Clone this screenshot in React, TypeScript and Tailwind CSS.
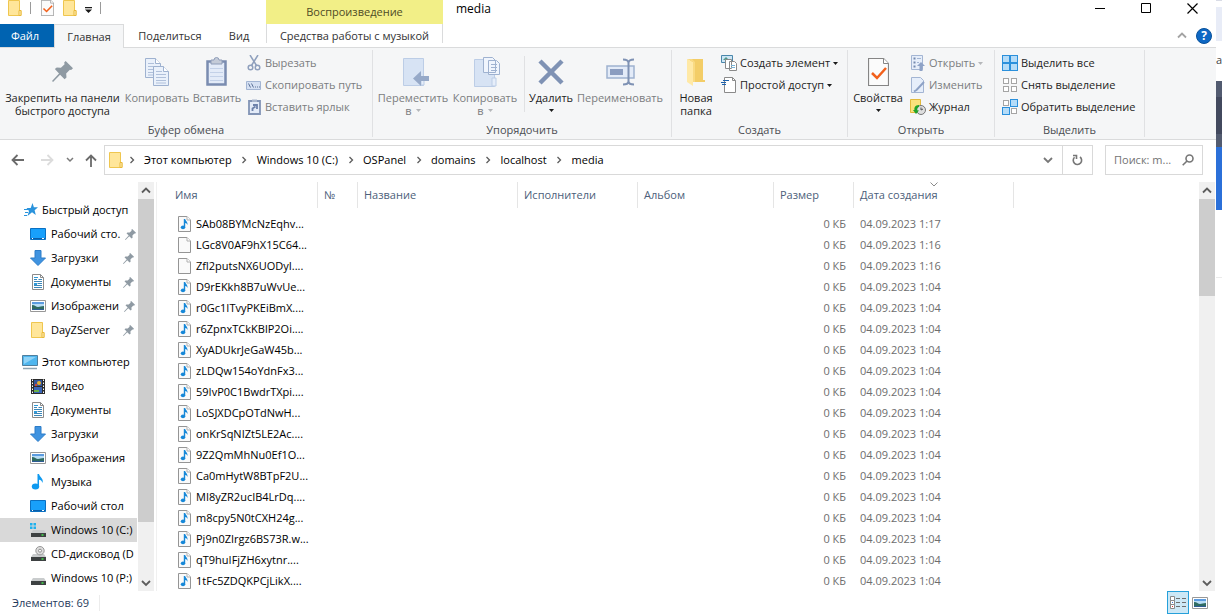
import type { ReactNode } from 'react';

type NavKind = 'desktop' | 'download' | 'doc' | 'picture' | 'folder' | 'video' | 'music' | 'windisk' | 'cd' | 'disk';

const pinned: { name: string; icon: NavKind }[] = [
  { name: 'Рабочий сто.', icon: 'desktop' },
  { name: 'Загрузки', icon: 'download' },
  { name: 'Документы', icon: 'doc' },
  { name: 'Изображени', icon: 'picture' },
  { name: 'DayZServer', icon: 'folder' },
];

const computer: { name: string; icon: NavKind; active?: boolean }[] = [
  { name: 'Видео', icon: 'video' },
  { name: 'Документы', icon: 'doc' },
  { name: 'Загрузки', icon: 'download' },
  { name: 'Изображения', icon: 'picture' },
  { name: 'Музыка', icon: 'music' },
  { name: 'Рабочий стол', icon: 'desktop' },
  { name: 'Windows 10 (C:)', icon: 'windisk', active: true },
  { name: 'CD-дисковод (D', icon: 'cd' },
  { name: 'Windows 10 (P:)', icon: 'disk' },
];

const files = [
  { name: 'SAb08BYMcNzEqhv...', date: '04.09.2023 1:17', music: true },
  { name: 'LGc8V0AF9hX15C64...', date: '04.09.2023 1:16', music: false },
  { name: 'Zfl2putsNX6UODyI....', date: '04.09.2023 1:16', music: false },
  { name: 'D9rEKkh8B7uWvUe...', date: '04.09.2023 1:04', music: true },
  { name: 'r0Gc1ITvyPKEiBmX....', date: '04.09.2023 1:04', music: true },
  { name: 'r6ZpnxTCkKBlP2Oi....', date: '04.09.2023 1:04', music: true },
  { name: 'XyADUkrJeGaW45b...', date: '04.09.2023 1:04', music: true },
  { name: 'zLDQw154oYdnFx3...', date: '04.09.2023 1:04', music: true },
  { name: '59IvP0C1BwdrTXpi....', date: '04.09.2023 1:04', music: true },
  { name: 'LoSJXDCpOTdNwH...', date: '04.09.2023 1:04', music: true },
  { name: 'onKrSqNIZt5LE2Ac....', date: '04.09.2023 1:04', music: true },
  { name: '9Z2QmMhNu0Ef1O...', date: '04.09.2023 1:04', music: true },
  { name: 'Ca0mHytW8BTpF2U...', date: '04.09.2023 1:04', music: true },
  { name: 'MI8yZR2ucIB4LrDq....', date: '04.09.2023 1:04', music: true },
  { name: 'm8cpy5N0tCXH24g...', date: '04.09.2023 1:04', music: true },
  { name: 'Pj9n0ZIrgz6BS73R.w...', date: '04.09.2023 1:04', music: true },
  { name: 'qT9huIFjZH6xytnr....', date: '04.09.2023 1:04', music: true },
  { name: '1tFc5ZDQKPCjLikX....', date: '04.09.2023 1:04', music: true },
];

const crumbs = ['Этот компьютер', 'Windows 10 (C:)', 'OSPanel', 'domains', 'localhost', 'media'];

function FolderIcon() {
  return (
    <svg width="14" height="16" viewBox="0 0 14 16" className="shrink-0">
      <path d="M.5.5h11v10h1.5v5H.5z" fill="#ffe69a" stroke="#efc64f" />
      <path d="M11 10.5h2v5h-2z" fill="#fff0bd" stroke="#e9b93a" />
    </svg>
  );
}

function PageIcon({ music }: { music: boolean }) {
  return (
    <svg width="13" height="16" viewBox="0 0 13 16" className="shrink-0">
      <path d="M.5.5h8.500l3.500 3.500v11.500H.5z" fill="#fafafa" stroke="#959595" />
      <path d="M9 .5V4h3.500" fill="#fff" stroke="#b0b0b0" />
      {music && (
        <>
          <path d="M5.800 3h1.400c.4 2 2.800 2.600 2.300 6-.5-1.200-1.100-1.800-2.300-2v4.500H5.800z" fill="#1788d8" />
          <ellipse cx="5" cy="11.300" rx="2.200" ry="1.900" fill="#1788d8" />
        </>
      )}
    </svg>
  );
}

function CheckPage({ big }: { big?: boolean }) {
  return (
    <svg width={big ? 21 : 13} height={big ? 28 : 16} viewBox="0 0 21 28" preserveAspectRatio="none">
      <path d="M.5.5h15l5 5v22H.5z" fill="#fbfbfb" stroke="#858585" strokeWidth="1.200" />
      <path d="M15.500.5v5h5" fill="#fff" stroke="#858585" />
      <path d="M4 15l5 5 9-10" fill="none" stroke="#f2601b" strokeWidth="2.500" />
    </svg>
  );
}

function PinIcon({ size }: { size: number }) {
  return (
    <svg width={size} height={size} viewBox="0 0 20 20" className="shrink-0">
      <path d="M13 0l7 7-1.800 1.500-1.200-.2-3.500 3.500.3 4-1.800 1.500-4.300-4.300L1 20l-1-1 6.700-7.200L2.700 7.700l1.800-1.500 4 .2L12 3l-.4-1.500z" fill="#8f9aa3" />
    </svg>
  );
}

function Arrow({ gray }: { gray?: boolean }) {
  return (
    <svg width="5" height="3" viewBox="0 0 5 3" className="inline-block shrink-0">
      <path d="M0 0h5L2.500 3z" fill={gray ? '#b5b7ba' : '#1a1a1a'} />
    </svg>
  );
}

function Chevron({ dir, color = '#5c5c5c' }: { dir: 'up' | 'down' | 'right'; color?: string }) {
  const d = { up: 'M1 6.500l4-4 4 4', down: 'M1 3l4 4 4-4', right: 'M3.500 2l3 3-3 3' }[dir];
  return (
    <svg width="10" height="10" viewBox="0 0 10 10" fill="none" className="shrink-0">
      <path d={d} stroke={color} strokeWidth={dir === 'right' ? 1.3 : 1.8} />
    </svg>
  );
}

function NavIcon({ kind }: { kind: NavKind }) {
  if (kind === 'folder') return <span className="flex w-4 shrink-0 justify-center"><FolderIcon /></span>;
  return (
    <svg width="16" height="16" viewBox="0 0 16 16" className="shrink-0">
      {kind === 'desktop' && (
        <>
          <path d="M.5 2.500h15v11H.5z" fill="#18a0fb" stroke="#0a70c2" />
          <path d="M1 12.500h14" stroke="#0b5ea8" />
          <path d="M2 12.500h1M12 12.500h2" stroke="#fff" />
        </>
      )}
      {kind === 'download' && <path d="M5 .5h6v7.500h4.500L8 15.500.5 8H5z" fill="#3f93e0" stroke="#2c7cc8" />}
      {kind === 'doc' && (
        <>
          <path d="M2.500.5h8l3 3v12h-11z" fill="#fff" stroke="#8b8b8b" />
          <path d="M10.500.5v3h3" fill="none" stroke="#8b8b8b" />
          <path d="M4 5.500h3M8.500 5.500h3.500M4 7.500h8M7.500 9.500H12M4 11.500h8M4 13.500h8" stroke="#3d87b8" />
          <path d="M4 9h3v2H4zM4 3h4v1H4z" fill="#2f9ad8" />
        </>
      )}
      {kind === 'picture' && (
        <>
          <path d="M.5 2.500h15v11H.5z" fill="#fff" stroke="#989898" />
          <path d="M2 4h12v8H2z" fill="#b7dcf5" />
          <path d="M2 4h12v2H2z" fill="#5b9be0" />
          <path d="M2 7c3 0 4 2 6 2s3-1 6-1v4H2z" fill="#2f6b62" />
          <path d="M2 11h12v1H2z" fill="#2e5c96" />
        </>
      )}
      {kind === 'video' && (
        <>
          <path d="M1 1h14v15H1z" fill="#2b2b2b" />
          <path d="M2.500 1.500v14M13.500 1.500v14" stroke="#fff" strokeDasharray="1.500 1.500" />
          <path d="M4 2h8v6H4z" fill="#31549c" />
          <path d="M4 9h8v6H4z" fill="#3a66b8" />
          <circle cx="9" cy="5" r="2" fill="#e4b02f" />
          <circle cx="6" cy="7" r="1.200" fill="#c9473b" />
          <path d="M4 12h5v2H4z" fill="#6bb04b" />
        </>
      )}
      {kind === 'music' && (
        <>
          <path d="M7.500 0h1.500c.5 3 5 4.500 3.500 9-.5-2-1.500-3-3.500-3.300V12H7.500z" fill="#0f9af0" />
          <ellipse cx="5.500" cy="12.500" rx="3.700" ry="3" fill="#0f9af0" />
        </>
      )}
      {(kind === 'windisk' || kind === 'cd' || kind === 'disk') && (
        <>
          <path d="M3 8h11l2 3H1z" fill="#c9cccd" />
          <path d="M1 11h15v4H1z" fill="#3d4142" />
          <path d="M11.500 13h2" stroke="#42e04b" strokeWidth="1.500" />
        </>
      )}
      {kind === 'windisk' && <path d="M0 1h2.500v2.500H0zM3.500 1H6v2.500H3.500zM0 4.500h2.500V7H0zM3.500 4.500H6V7H3.500z" fill="#1fb1ee" />}
      {kind === 'cd' && (
        <>
          <circle cx="10" cy="4.700" r="4.200" fill="#dcdcdc" stroke="#979797" />
          <circle cx="10" cy="4.700" r="1.500" fill="#fff" stroke="#8f8f8f" />
        </>
      )}
    </svg>
  );
}

function ScrollBar({ thumb }: { thumb: string }) {
  return (
    <div className="flex w-4 shrink-0 flex-col items-center bg-[#f0f0f0]">
      <button aria-label="Прокрутить вверх" className="flex h-[17px] shrink-0 items-center"><Chevron dir="up" /></button>
      <div className={`w-full bg-[#cdcdcd] ${thumb}`} />
      <button aria-label="Прокрутить вниз" className="mt-auto flex h-[17px] shrink-0 items-center"><Chevron dir="down" /></button>
    </div>
  );
}

function Group({ label, className, children }: { label: string; className: string; children: ReactNode }) {
  return (
    <section className={`flex shrink-0 flex-col border-r border-[#e0e1e3] pt-0.5 ${className}`}>
      <div className="flex h-[66px]">{children}</div>
      <h2 className="mt-[5px] text-center leading-[14px] text-[#4a4d52]">{label}</h2>
    </section>
  );
}

function BigButton({ icon, lines, className, disabled, arrow }: {
  icon: ReactNode; lines: string[]; className: string; disabled?: boolean; arrow?: 'own' | 'inline';
}) {
  return (
    <button disabled={disabled} className={`flex shrink-0 flex-col items-center whitespace-nowrap leading-[13px] ${disabled ? 'text-[#7b7d80]' : 'text-[#1e1e1e]'} ${className}`}>
      <span className="flex h-[39px] items-center justify-center">{icon}</span>
      {lines.map((line, i) => (
        <span key={line} className="flex items-center gap-1">
          {line}
          {arrow === 'inline' && i === lines.length - 1 && <Arrow gray={disabled} />}
        </span>
      ))}
      {arrow === 'own' && <span className="flex h-3 items-center"><Arrow /></span>}
    </button>
  );
}

function SmallButton({ icon, label, disabled, arrow }: { icon: ReactNode; label: string; disabled?: boolean; arrow?: boolean }) {
  return (
    <button disabled={disabled} className={`flex h-[22px] items-center gap-[3px] whitespace-nowrap ${disabled ? 'text-[#7b7d80]' : 'text-[#1e1e1e]'}`}>
      <span className="flex w-4 shrink-0 justify-center">{icon}</span>
      {label}
      {arrow && <span className="flex"><Arrow gray={disabled} /></span>}
    </button>
  );
}

function Pages() {
  return (
    <svg width="28" height="30" viewBox="0 0 28 30">
      {[[2, 1], [10, 9]].map(([x, y]) => (
        <g key={x} transform={`translate(${x} ${y})`}>
          <path d="M.5.5h10l5 5v14H.5z" fill="#eaf1fb" stroke="#9fb2d0" />
          <path d="M10.500.5v5h5" fill="#fff" stroke="#9fb2d0" />
          <path d="M3 5.500h6M3 8.500h10M3 11.500h10M3 14.500h10M3 17h10" stroke="#b0c0da" />
        </g>
      ))}
    </svg>
  );
}

function SelectIcon({ on }: { on: boolean[] }) {
  return (
    <svg width="16" height="16" viewBox="0 0 16 16">
      {on.map((lit, i) => {
        const x = (i % 2) * 8;
        const y = Math.floor(i / 2) * 8;
        return lit
          ? <rect key={i} x={x + 0.5} y={y + 0.5} width="7" height="7" fill="#b5dcf8" stroke="#2b90dc" />
          : <rect key={i} x={x + 1.5} y={y + 1.5} width="5" height="5" fill="#fff" stroke="#a5a5a5" />;
      })}
    </svg>
  );
}

function TopBar() {
  return (
    <header>
      <div className="flex h-6">
        <div className="flex w-[266px] shrink-0 items-start gap-2 pl-2">
          <FolderIcon />
          <span className="mt-0.5 h-3 w-px bg-[#9a9a9a]" />
          <button aria-label="Свойства" className="flex w-4 justify-center"><CheckPage /></button>
          <button aria-label="Новая папка" className="flex w-[14px] justify-center"><FolderIcon /></button>
          <button aria-label="Настройка панели" className="flex h-[19px] items-center">
            <svg width="7" height="6" viewBox="0 0 7 6"><path d="M0 0h7v1.200H0zM0 2.500h7L3.500 6z" fill="#1a1a1a" /></svg>
          </button>
          <span className="mt-0.5 h-3 w-px bg-[#9a9a9a]" />
        </div>
        <div className="flex w-[177px] shrink-0 items-center justify-center bg-[#f2ef87] text-[#4e4c26]">Воспроизведение</div>
        <h1 className="pl-[13px] text-xs leading-[18px] text-black">media</h1>
        <div className="ml-auto flex h-4 pr-px">
          <button aria-label="Свернуть" className="flex w-[45px] items-center justify-center">
            <svg width="11" height="11"><path d="M0 5.500h10" stroke="#000" /></svg>
          </button>
          <button aria-label="Развернуть" className="flex w-[46px] items-center justify-center">
            <svg width="11" height="11"><path d="M.5.5h9v9h-9z" fill="none" stroke="#000" /></svg>
          </button>
          <button aria-label="Закрыть" className="flex w-[46px] items-center justify-center">
            <svg width="11" height="11"><path d="M.5.5l10 10M10.500.5l-10 10" stroke="#000" strokeWidth="1.200" /></svg>
          </button>
        </div>
      </div>
      <nav className="flex h-6 items-stretch border-b border-[#dadbdc] text-[#333]">
        <button className="w-[54px] bg-[#0063b1] pr-1 text-white">Файл</button>
        <button className="-mb-px w-[70px] border border-b-0 border-[#dadbdc] bg-[#f5f6f7]">Главная</button>
        <button className="w-[92px]">Поделиться</button>
        <button className="w-[50px] pr-1">Вид</button>
        <button className="mb-1 w-[177px] border-x border-[#dadbdc] pt-1 whitespace-nowrap">Средства работы с музыкой</button>
        <div className="ml-auto flex items-center gap-[9px] pr-1">
          <button aria-label="Свернуть ленту" className="flex"><Chevron dir="up" color="#a3a3a3" /></button>
          <button aria-label="Справка" className="flex size-4 items-center justify-center rounded-full border border-[#08519b] bg-[#0e68c4] text-xs font-bold text-white">?</button>
        </div>
      </nav>
    </header>
  );
}

function Ribbon() {
  return (
    <div className="flex border-b border-[#dadbdc] bg-[#f5f6f7] py-0.5">
      <Group label="Буфер обмена" className="w-[373px]">
        <BigButton className="ml-1 w-[117px]" icon={<PinIcon size={21} />} lines={['Закрепить на панели', 'быстрого доступа']} />
        <BigButton className="ml-1 w-16" disabled icon={<Pages />} lines={['Копировать']} />
        <BigButton
          className="w-14"
          disabled
          icon={
            <svg width="22" height="30" viewBox="0 0 22 30">
              <path d="M1.500 4.500h18v23h-18z" fill="#e3ebf8" stroke="#7a8cb0" strokeWidth="2.500" />
              <path d="M5 3h3a2.500 2.500 0 0 1 5 0h3v4H5z" fill="#c4cbd8" stroke="#8e9cb8" />
              <path d="M4 11.500h13M4 15.500h13M4 19.500h13M4 23.500h13" stroke="#c3d1e8" />
            </svg>
          }
          lines={['Вставить']}
        />
        <div className="ml-px">
          <SmallButton disabled label="Вырезать" icon={
            <svg width="14" height="16" viewBox="0 0 14 16" fill="none" stroke="#8fa0bd" strokeWidth="1.500">
              <path d="M3 0l6.500 10.500M11 0L4.500 10.500" /><circle cx="3.500" cy="12.500" r="2.300" /><circle cx="10.500" cy="12.500" r="2.300" />
            </svg>
          } />
          <SmallButton disabled label="Скопировать путь" icon={
            <svg width="16" height="9" viewBox="0 0 16 9">
              <path d="M.5.5h14v8H.5z" fill="#d5e0f2" stroke="#a3b5d3" />
              <path d="M2.500 2.500l2 4M5.500 2.500l2 4M9 6h1M11 6h1M13 6h1" stroke="#5d7399" />
            </svg>
          } />
          <SmallButton disabled label="Вставить ярлык" icon={
            <svg width="13" height="16" viewBox="0 0 13 16">
              <path d="M1 2h11v13H1z" fill="#e3ebf8" stroke="#8294b5" strokeWidth="1.800" />
              <path d="M4 .5h5v2.500H4z" fill="#a9b6cd" />
              <path d="M4.500 12V9.500l3-2M5 6h4v4" stroke="#6d82ab" strokeWidth="1.800" fill="none" />
            </svg>
          } />
        </div>
      </Group>
      <Group label="Упорядочить" className="w-[299px]">
        <BigButton
          className="ml-1 w-[72px]"
          disabled
          arrow="inline"
          icon={
            <svg width="22" height="30" viewBox="0 0 22 30" overflow="visible">
              <path d="M1.500 1.500h20v27h-20z" fill="#d7e3f4" stroke="#bccde6" />
              <path d="M19 20h3v8h-3z" fill="#e6eefa" stroke="#bccde6" />
              <path d="M19 14v5h8v5h-8v5l-8-7.500z" fill="#96a9c8" />
            </svg>
          }
          lines={['Переместить', 'в']}
        />
        <BigButton
          className="w-[72px]"
          disabled
          arrow="inline"
          icon={
            <svg width="24" height="32" viewBox="0 0 24 32" overflow="visible">
              <path d="M1.500 3.500h20v27h-20z" fill="#d7e3f4" stroke="#bccde6" />
              <path d="M19 22h4v8h-4z" fill="#e6eefa" stroke="#bccde6" />
              <path d="M10.500 1.500h9l3 3v12h-12zM15.500 4.500h8l3 3v11h-11z" fill="#f0f5fd" stroke="#9fb2d0" />
              <path d="M18 8.500h6M18 11.500h6M18 14.500h6" stroke="#9fb2d0" />
            </svg>
          }
          lines={['Копировать', 'в']}
        />
        <span className="ml-[3px] mt-1 h-14 w-px bg-[#e0e1e3]" />
        <BigButton className="ml-0.5 w-12" arrow="own" icon={
          <svg width="26" height="26" viewBox="0 0 26 26"><path d="M2 2l22 22M24 2L2 24" stroke="#7f92b4" strokeWidth="4.500" /></svg>
        } lines={['Удалить']} />
        <BigButton className="w-[90px]" disabled icon={
          <svg width="29" height="28" viewBox="0 0 29 28">
            <path d="M1 8h27v12H1z" fill="#e3ebf8" stroke="#9fb2d0" strokeWidth="1.500" />
            <path d="M4 11h13v6H4z" fill="#8b9dc0" />
            <path d="M17 1.500q5 0 5.500 3 .5-3 5.500-3M22.500 4v20M17 26.500q5 0 5.500-3 .5 3 5.500 3" fill="none" stroke="#7f92b4" strokeWidth="2" />
          </svg>
        } lines={['Переименовать']} />
      </Group>
      <Group label="Создать" className="w-44">
        <BigButton className="ml-1 w-10" icon={
          <svg width="20" height="28" viewBox="0 0 20 28">
            <path d="M4 1h13v21h2v2H4z" fill="#f3cd67" />
            <path d="M1 1l6 3v24l-6-4z" fill="#ffe9a6" />
            <path d="M1 1h5l3 3v20H7V4z" fill="#f9da82" />
          </svg>
        } lines={['Новая', 'папка']} />
        <div className="ml-[5px]">
          <SmallButton arrow label="Создать элемент" icon={
            <svg width="16" height="16" viewBox="0 0 16 16">
              <path d="M.5.5h11v7H.5z" fill="#cde6f5" stroke="#4a87ab" /><path d="M2 5l3-3 3 3z" fill="#4f9a8c" />
              <path d="M4.500 4.500h6v9h-6zM8.500 6.500h5l2 2v7h-7z" fill="#fff" stroke="#8a8a8a" />
              <path d="M10 10.500h4M10 12.500h4" stroke="#7ab4d8" />
            </svg>
          } />
          <SmallButton arrow label="Простой доступ" icon={
            <svg width="16" height="16" viewBox="0 0 16 16">
              <path d="M3.500.5h8l3 3v12h-11z" fill="#fff" stroke="#8a8a8a" /><path d="M11.500.5v3h3" fill="none" stroke="#8a8a8a" />
              <path d="M2 3.500h6M0 5.500h5M1 7.500h4" stroke="#1d62ad" />
            </svg>
          } />
        </div>
      </Group>
      <Group label="Открыть" className="w-[147px]">
        <BigButton className="ml-1 w-[52px]" arrow="own" icon={<CheckPage big />} lines={['Свойства']} />
        <div className="ml-1.5">
          <SmallButton disabled arrow label="Открыть" icon={
            <svg width="14" height="16" viewBox="0 0 14 16">
              <path d="M.5.5h11v14H.5z" fill="#e6eefa" stroke="#a3b5d3" />
              <path d="M2.500 3.500h2M2.500 7.500h2M2.500 11.500h2" stroke="#7489ae" strokeWidth="2" />
              <path d="M6 3.500h4M6 7.500h2" stroke="#a3b5d3" /><path d="M10 7l4 4h-2.500v5h-3v-5H6z" fill="#8ea2c6" />
            </svg>
          } />
          <SmallButton disabled label="Изменить" icon={
            <svg width="14" height="16" viewBox="0 0 14 16">
              <path d="M.5.5h9l3 3v12H.5z" fill="#e6eefa" stroke="#a3b5d3" />
              <path d="M13 5L5.500 13 3 14.500" stroke="#8ea2c6" strokeWidth="2" fill="none" />
            </svg>
          } />
          <SmallButton label="Журнал" icon={
            <svg width="16" height="16" viewBox="0 0 16 16">
              <path d="M.5.5h10v13H.5z" fill="#fbe27c" stroke="#e2b93b" />
              <circle cx="11" cy="11" r="4.500" fill="#dedede" stroke="#777" /><path d="M11 8.500V11l2-1" stroke="#555" fill="none" />
              <path d="M9 6c-4 0-5 3-4.500 5L3 11l3 4 3-3.500-1.800-.2C7 9 8 8 9 8z" fill="#22a329" />
            </svg>
          } />
        </div>
      </Group>
      <Group label="Выделить" className="w-[150px]">
        <div className="pl-[7px]">
          <SmallButton label="Выделить все" icon={<SelectIcon on={[true, true, true, true]} />} />
          <SmallButton label="Снять выделение" icon={<SelectIcon on={[false, false, false, false]} />} />
          <SmallButton label="Обратить выделение" icon={<SelectIcon on={[false, true, true, false]} />} />
        </div>
      </Group>
    </div>
  );
}

function AddressBar() {
  return (
    <div className="flex h-[42px] items-center pb-0.5 pr-[13px]">
      <div className="flex w-[104px] shrink-0 items-center pl-[11px]">
        <button aria-label="Назад">
          <svg width="13" height="12" viewBox="0 0 13 12" fill="none" stroke="#6b6b6b" strokeWidth="1.800"><path d="M13 6H1.500M6.500 1l-5 5 5 5" /></svg>
        </button>
        <button aria-label="Вперед" disabled className="ml-[17px]">
          <svg width="13" height="12" viewBox="0 0 13 12" fill="none" stroke="#dcdcdc" strokeWidth="1.800"><path d="M0 6h11.500M6.500 1l5 5-5 5" /></svg>
        </button>
        <button aria-label="Последние расположения" className="ml-3">
          <svg width="8" height="8" viewBox="0 0 8 8" fill="none" stroke="#7a7a7a" strokeWidth="1.500"><path d="M1 2l3 3 3-3" /></svg>
        </button>
        <button aria-label="Вверх" className="ml-[11px]">
          <svg width="12" height="13" viewBox="0 0 12 13" fill="none" stroke="#6b6b6b" strokeWidth="1.800"><path d="M6 13V1.500M1 6.500l5-5 5 5" /></svg>
        </button>
      </div>
      <div className="flex h-[30px] flex-1 items-center border border-[#d9d9d9] pl-1">
        <FolderIcon />
        <ol className="-ml-1 flex items-center text-black">
          {crumbs.map((crumb) => (
            <li key={crumb} className="flex items-center">
              <span className="flex w-[25px] justify-center"><Chevron dir="right" /></span>
              <a href="#">{crumb}</a>
            </li>
          ))}
        </ol>
        <button aria-label="Предыдущие расположения" className="ml-auto mr-[9px]"><Chevron dir="down" color="#777" /></button>
        <button aria-label="Обновить" className="flex h-full w-[30px] items-center justify-center border-l border-[#d9d9d9]">
          <svg width="11" height="12" viewBox="0 0 11 12" fill="none" stroke="#777" strokeWidth="1.600">
            <path d="M2.500 3.300A4.200 4.200 0 1 0 8 3M1 1.500h3.500V5" />
          </svg>
        </button>
      </div>
      <label className="ml-3 flex h-[30px] w-[98px] shrink-0 items-center border border-[#d9d9d9] px-2">
        <input type="text" aria-label="Поиск" placeholder="Поиск: m..." className="w-full min-w-0 bg-transparent outline-none placeholder:text-[#737373]" />
        <svg width="12" height="12" viewBox="0 0 12 12" fill="none" stroke="#777" strokeWidth="1.600" className="shrink-0">
          <circle cx="7.500" cy="4.500" r="3.500" /><path d="M5 7L.7 11.300" />
        </svg>
      </label>
    </div>
  );
}

function Sidebar() {
  return (
    <aside className="flex w-[157px] shrink-0 border-r border-[#f0f0f0] text-black">
      <div className="mr-px w-[137px] pt-4">
        <a href="#" className="flex h-6 items-center gap-1 whitespace-nowrap pl-6">
          <svg width="14" height="14" viewBox="0 0 14 14" className="shrink-0">
            <path d="M8.500 0l1.400 4.300H14l-3.400 2.900L11.800 12 8 9.200 3.500 13l1.500-5L2.500 5h4.200z" fill="#2a93dc" />
            <path d="M0 6.500h4M1 9.500h3M0 12.500h3" stroke="#2a93dc" />
          </svg>
          Быстрый доступ
        </a>
        {pinned.map((item) => (
          <a key={item.name} href="#" className="flex h-6 items-center gap-[5px] whitespace-nowrap pl-[30px] pr-[3px]">
            <NavIcon kind={item.icon} />
            {item.name}
            <span className="ml-auto"><PinIcon size={11} /></span>
          </a>
        ))}
        <a href="#" className="mt-2 flex h-6 items-center gap-1 whitespace-nowrap pl-[22px]">
          <svg width="16" height="16" viewBox="0 0 16 16" className="shrink-0">
            <path d="M.5 1.500h15v10H.5z" fill="#4fb6ee" stroke="#4f7f9e" />
            <path d="M2 3h12L2 10z" fill="#8fd3f7" /><path d="M1 14.500h14" stroke="#8fa5b3" strokeWidth="1.500" />
          </svg>
          Этот компьютер
        </a>
        {computer.map((item) => (
          <a key={item.name} href="#" className={`flex h-6 items-center gap-[5px] whitespace-nowrap pl-[30px] ${item.active ? 'bg-[#d9d9d9]' : ''}`}>
            <NavIcon kind={item.icon} />
            {item.name}
          </a>
        ))}
      </div>
      <ScrollBar thumb="h-[323px]" />
    </aside>
  );
}

const columns = [
  { label: 'Имя', width: 'w-[161px]' },
  { label: '№', width: 'w-10' },
  { label: 'Название', width: 'w-40' },
  { label: 'Исполнители', width: 'w-[120px]' },
  { label: 'Альбом', width: 'w-[136px]' },
  { label: 'Размер', width: 'w-20' },
  { label: 'Дата создания', width: 'w-40' },
];

function FileList() {
  return (
    <div className="flex-1">
      <table className="w-[857px] table-fixed border-collapse whitespace-nowrap">
        <thead>
          <tr className="h-[31px] text-left align-top text-[#4c607a]">
            {columns.map((col, i) => (
              <th key={col.label} className={`p-0 font-normal ${col.width}`}>
                <div className={`relative h-[26px] border-r border-[#e5e5e5] leading-[26px] ${i === 0 ? 'pl-[18px]' : 'pl-1.5'}`}>
                  {col.label}
                  {i === 6 && (
                    <svg width="8" height="5" viewBox="0 0 8 5" className="absolute left-[76px] top-0" fill="none" stroke="#8a8a8a"><path d="M.5.5L4 4 7.500.5" /></svg>
                  )}
                </div>
              </th>
            ))}
          </tr>
        </thead>
        <tbody className="text-[#6d6d6d]">
          {files.map((file) => (
            <tr key={file.name} className="h-[21px]">
              <td className="p-0">
                <div className="flex items-center gap-[5px] pl-[21px] text-black"><PageIcon music={file.music} />{file.name}</div>
              </td>
              <td /><td /><td /><td />
              <td className="p-0 pr-2 text-right">0 КБ</td>
              <td className="p-0 pl-1.5">{file.date}</td>
            </tr>
          ))}
        </tbody>
      </table>
    </div>
  );
}

export default function App() {
  return (
    <div className="flex bg-white font-['Open_Sans',sans-serif] text-[11px] leading-4">
      <div className="min-w-0 flex-1">
        <TopBar />
        <Ribbon />
        <AddressBar />
        <main className="flex">
          <Sidebar />
          <FileList />
          <ScrollBar thumb="h-[97px]" />
          <div className="w-px" />
        </main>
        <footer className="flex h-[23px] items-center pl-3 pr-2 text-[#1e395b]">
          <span className="border-r border-[#ececec] pr-2.5">Элементов: 69</span>
          <button aria-label="Таблица" className="ml-auto flex h-[23px] w-[22px] items-center justify-center border border-[#26a0da] bg-[#cce8f6]">
            <svg width="16" height="14" viewBox="0 0 16 14">
              <path d="M.5.5h4v4h-4zM.5 4.500h4v4h-4zM.5 8.500h4v4h-4z" fill="#fff" stroke="#8a8a8a" />
              <path d="M6 2.500h4M12 2.500h4M6 6.500h4M12 6.500h4M6 10.500h4M12 10.500h4" stroke="#6e6e6e" />
              <path d="M2 6h1v1H2z" fill="#3f78d8" /><path d="M2 10h1v1H2z" fill="#d33" />
            </svg>
          </button>
          <button aria-label="Крупные значки" className="ml-[3px]"><NavIcon kind="picture" /></button>
        </footer>
      </div>
      {/* sliver of the window behind */}
      <div className="w-1.5 shrink-0 overflow-hidden">
        <div className="h-px bg-[#d9dce6]" />
        <div className="mt-1.5 h-[34px] bg-[#e8ecf7]" />
        <div className="flex h-10 items-center justify-end pb-0.5 text-[#444]">na</div>
        <div className="h-4 bg-[#525b70]" />
        <div className="h-[37px] bg-[#42495e]" />
        <div className="h-[13px] bg-[#525b70]" />
        <div className="h-[63px] bg-[#2b70d9]" />
        <div className="mt-[67px] h-px bg-[#ebebeb]" />
      </div>
    </div>
  );
}
